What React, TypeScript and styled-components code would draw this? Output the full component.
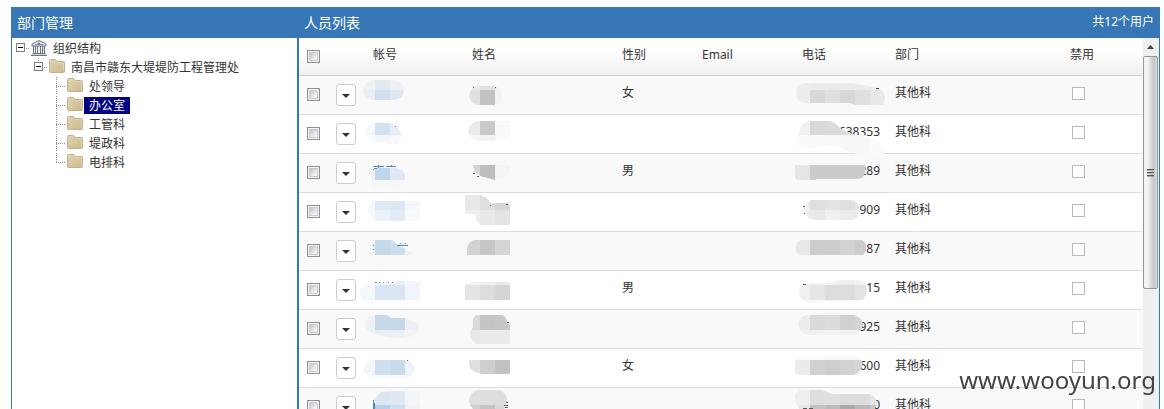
import React, { useId } from "react";
import styled, { createGlobalStyle } from "styled-components";

const BLUE = "#3777b6";

const GlobalStyle = createGlobalStyle`
  * { box-sizing: border-box; }
  body {
    margin: 0;
    background: #fff;
    color: #333;
    font: 12px/18px "Noto Sans", "Noto Sans CJK SC", sans-serif;
  }
`;

const Shell = styled.div`
  display: grid;
  grid-template-columns: 286px minmax(0, 1fr);
  height: 100vh;
  padding: 7px 4px 0 11px;
  overflow: hidden;
`;

const Panel = styled.section<{ $main?: boolean }>`
  display: flex;
  flex-direction: column;
  min-height: 0;
  border: solid ${BLUE};
  border-width: ${(p) => (p.$main ? "0 1px 0 2px" : "0 0 0 1px")};
`;

const PanelHeader = styled.header`
  display: flex;
  flex: none;
  align-items: center;
  justify-content: space-between;
  height: 31px;
  padding: 0 5px;
  background: ${BLUE};
  color: #fff;
`;

const PanelTitle = styled.h2`
  margin: 0;
  font-size: 14px;
  font-weight: 400;
`;

const Count = styled.span`
  padding-bottom: 2px;
`;

/* ---------- department tree ---------- */

const TreeList = styled.ul`
  margin: 0;
  padding: 0;
  list-style: none;
`;

const Branch = styled(TreeList)`
  padding-left: 18px;
`;

const TreeRow = styled.div`
  display: flex;
  align-items: flex-end;
  height: 19px;
`;

const Toggle = styled.button`
  display: block;
  width: 18px;
  height: 19px;
  padding: 0;
  border: 0;
  background: none;
`;

const NodeIcon = styled.svg`
  display: block;
  flex: none;
  width: 18px;
  height: 19px;
`;

const NodeLabel = styled.a<{ $selected?: boolean }>`
  height: 17px;
  padding: 0 5px;
  line-height: 17px;
  white-space: nowrap;
  text-decoration: none;
  color: ${(p) => (p.$selected ? "#fff" : "#333")};
  background: ${(p) => (p.$selected ? "#000080" : "transparent")};
`;

function Guide({ toggle, up, down }: { toggle?: boolean; up?: boolean; down?: boolean }) {
  const dots = { stroke: "#909090", strokeDasharray: "1 1", fill: "none" };
  return (
    <NodeIcon viewBox="0 0 18 19" aria-hidden="true" shapeRendering="crispEdges">
      {up && <path d="M8.5 1V10" {...dots} />}
      {down && <path d="M8.5 11V20" {...dots} />}
      <path d="M8 10.5H18" {...dots} />
      {toggle && (
        <>
          <rect x="4.5" y="5.5" width="8" height="8" fill="#fff" stroke="#808080" />
          <path d="M6 9.5H11" stroke="#000" />
        </>
      )}
    </NodeIcon>
  );
}

function FolderIcon() {
  const id = useId();
  return (
    <NodeIcon viewBox="0 0 18 19" aria-hidden="true">
      <linearGradient id={id} x1="0" y1="0" x2="1" y2="1">
        <stop offset="0" stopColor="#e2d5b6" />
        <stop offset="1" stopColor="#cbb88c" />
      </linearGradient>
      <path
        d="M1.5 3.5Q1.5 2.5 2.5 2.5H7.5L9.5 4.5H15.5Q16.5 4.5 16.5 5.5V14.5Q16.5 15.5 15.5 15.5H2.5Q1.5 15.5 1.5 14.5Z"
        fill={`url(#${id})`}
        stroke="#c2b189"
      />
      <path d="M9.5 5.5H15.5V14" fill="none" stroke="#e9dfc6" strokeOpacity="0.6" />
    </NodeIcon>
  );
}

function BankIcon() {
  return (
    <NodeIcon viewBox="0 0 18 19" aria-hidden="true">
      <path d="M9 2.5L2 6V8H16V6Z" fill="#dfe6ea" stroke="#667783" />
      <path d="M5 6.5H13" stroke="#8696a1" />
      <circle cx="9" cy="5.5" r="1" fill="#5a6b76" />
      <path
        d="M3.5 8V15M5.5 8V15M7.5 8V15M10.5 8V15M12.5 8V15M14.5 8V15"
        stroke="#667783"
      />
      <path d="M4.5 9V14M9 9V14M13.5 9V14" stroke="#dde4e8" />
      <path d="M2.5 15.5H15.5M1 17.5H17" fill="none" stroke="#667783" />
      <path d="M1.5 16.5H16.5" stroke="#cfd8dd" />
    </NodeIcon>
  );
}

const departments = ["处领导", "办公室", "工管科", "堤政科", "电排科"];

const TreeNav = styled.nav`
  min-height: 0;
  overflow: hidden;
`;

function DepartmentTree() {
  return (
    <TreeNav aria-label="部门管理">
      <TreeList>
        <li>
          <TreeRow>
            <Toggle aria-label="组织结构">
              <Guide toggle />
            </Toggle>
            <BankIcon />
            <NodeLabel href="#">组织结构</NodeLabel>
          </TreeRow>
          <Branch>
            <li>
              <TreeRow>
                <Toggle aria-label="南昌市赣东大堤堤防工程管理处">
                  <Guide toggle up />
                </Toggle>
                <FolderIcon />
                <NodeLabel href="#">南昌市赣东大堤堤防工程管理处</NodeLabel>
              </TreeRow>
              <Branch>
                {departments.map((name, i) => (
                  <li key={name}>
                    <TreeRow>
                      <Guide up down={i < departments.length - 1} />
                      <FolderIcon />
                      <NodeLabel href="#" $selected={name === "办公室"}>
                        {name}
                      </NodeLabel>
                    </TreeRow>
                  </li>
                ))}
              </Branch>
            </li>
          </Branch>
        </li>
      </TreeList>
    </TreeNav>
  );
}

/* ---------- privacy mosaic over personal data ---------- */

type Mask = {
  shape: string;
  xs: number[];
  ys: number[];
  tones: string[];
  trace?: string;
};

const MosaicSvg = styled.svg`
  position: absolute;
  top: 0;
  left: 0;
  width: 100px;
  height: 39px;
  overflow: visible;
  pointer-events: none;
`;

function Mosaic({ mask, ink = "#555" }: { mask: Mask; ink?: string }) {
  const id = useId();
  const { shape, xs, ys, tones, trace } = mask;
  return (
    <MosaicSvg aria-hidden="true" shapeRendering="crispEdges">
      <clipPath id={id}>
        <path d={shape} />
      </clipPath>
      <g clipPath={`url(#${id})`}>
        {tones.flatMap((line, r) =>
          line.split(" ").map((tone, c) => (
            <rect
              key={`${r}-${c}`}
              x={xs[c]}
              y={ys[r]}
              width={xs[c + 1] - xs[c]}
              height={ys[r + 1] - ys[r]}
              fill={`#${tone}`}
            />
          ))
        )}
      </g>
      {trace && <path d={trace} stroke={ink} fill="none" />}
    </MosaicSvg>
  );
}

const AX = [-8, 10, 25, 40, 60];
const NX = [0, 16, 31, 46];
const PX = [0, 16, 31, 46, 61, 76, 92];

type Person = { account: Mask; name: Mask; gender?: string; tail: string; phone: Mask };

const people: Person[] = [
  {
    account: {
      shape: "M8 4H29Q39 5 39 14Q39 23 29 24H8Q-2 23 -2 14Q-2 5 8 4Z",
      xs: AX, ys: [4, 14, 24],
      tones: ["eff2f3 e3e9f1 eef0f4", "e9eff5 cfdfed dfe7f1"],
    },
    name: {
      shape: "M13 10H31Q38 13 38 20Q38 27 31 29H14Q6 27 5 20Q6 12 13 10Z",
      xs: NX, ys: [10, 14, 29],
      tones: ["e8e8e8 e0e0e0 efefef", "e0e0df c2c2c2 f2f3f4"],
      trace: "M9 11.5H10M31 11.5H32",
    },
    gender: "女",
    tail: "",
    phone: {
      shape: "M12 7H55Q75 9 86 13Q91 17 91 22L89 29H62L55 27H12Q2 26 2 17Q2 8 12 7Z",
      xs: PX, ys: [7, 14, 29],
      tones: ["ededed ebebeb e9ebea ebebeb ececec eeeeee", "ededed d8d8d8 dde0df d8d8d8 dfdfdf e8e8e8"],
      trace: "M82 12.5H85",
    },
  },
  {
    account: {
      shape: "M0 15Q2 9 10 8H25Q34 11 37 20Q34 30 27 30Q22 30 18 27L8 27Q0 24 0 15Z",
      xs: AX, ys: [8, 20, 31],
      tones: ["f5f9fd d3e2f1 e6eef8", "f9fbfe f3f7fc f5f8fd"],
      trace: "M30 11.5H31",
    },
    name: {
      shape: "M14 6H46V21L35 26H14Q5 24 4 16Q6 7 14 6Z",
      xs: NX, ys: [6, 20, 27],
      tones: ["ebebeb cbc9c8 f8f9fb", "f6f6f4 f2f2f2 fbfbfb"],
    },
    tail: "638353",
    phone: {
      shape: "M5 17Q7 7 16 6H36Q42 8 46 13Q54 18 62 20H70Q86 24 90 34V38L88 42H80Q64 40 54 36Q40 28 26 32Q10 36 3 30Q1 24 5 17Z",
      xs: PX, ys: [6, 20, 43],
      tones: ["f1f1f1 d9d9d9 dadada dddddd f8f8f8 f8f8f8", "fafafa fafafa f9f9f9 f8f8f8 f8f8f8 fafafa"],
    },
  },
  {
    account: {
      shape: "M10 14H30Q38 15 40 20V26Q38 34 28 34H14Q6 34 6 26Q6 18 10 14Z",
      xs: AX, ys: [13, 26, 35],
      tones: ["f0f2f5 bfd5ea dfe7f1", "f5f6f7 f5f6f7 f5f6f7"],
      trace: "M8 12.5H19M21 12.5H31M13.5 11V14M9 14.5H12M26.5 11V13M8 15.5H9",
    },
    name: {
      shape: "M9 11H46V18Q42 25 31 26L24 24Q10 22 9 11Z",
      xs: NX, ys: [11, 26],
      tones: ["d6d4d2 bdbdbd f4f4f4"],
      trace: "M9 19.5H11M13 22.5H15",
    },
    gender: "男",
    tail: "289",
    phone: {
      shape: "M1 11H71V18Q70 25 64 25H22V26H4L1 24Z",
      xs: PX, ys: [11, 27],
      tones: ["e5e5e5 cbcbcb cbcbcb cbcbcb cbcbcb"],
    },
  },
  {
    account: {
      shape: "M8 8H55V26L50 28H12Q3 26 3 17Q4 10 8 8Z",
      xs: AX, ys: [8, 17, 28],
      tones: ["f3f8fc dfe9f4 dbe7f4 f4f8fc", "f8fbfe ecf2f9 e3ebf6 f7fafd"],
    },
    name: {
      shape: "M1 2H16Q24 4 26 10H44L46 13V32H16Q11 28 11 21H1Z",
      xs: NX, ys: [2, 17, 32],
      tones: ["e8e8e8 dfdfdf d6d6d6", "eeeeee e9e9e9 e3e3e3"],
      trace: "M26 12.5H27M42 11.5H44",
    },
    tail: "909",
    phone: {
      shape: "M16 7H57Q65 9 66 17Q65 25 58 27H20Q11 25 11 17Q11 10 16 7Z",
      xs: PX, ys: [7, 17, 28],
      tones: ["eeeeee dedfdf e2e3e2 dfdfdf e6e6e6", "eeeeee e9e9e9 f0f0f0 ebebeb ebebeb"],
      trace: "M9 13.5H11M10 20.5H11",
    },
  },
  {
    account: {
      shape: "M8 8H27L34 14Q44 18 48 23H6Z",
      xs: AX, ys: [8, 23],
      tones: ["f1f3f5 c4d8ea cddded eff2f6"],
      trace: "M32 13.5H43M35 11.5H36M40 11.5H41M8 13.5H9M8 17.5H9",
    },
    name: {
      shape: "M10 8H46V23H3V17Q4 10 10 8Z",
      xs: NX, ys: [8, 23],
      tones: ["d4d2d3 c6c6c6 d5d5d5"],
    },
    tail: "87",
    phone: {
      shape: "M8 8H68L72 12V19L69 23H8Q1 21 1 15Q3 9 8 8Z",
      xs: PX, ys: [8, 23],
      tones: ["e8e8e8 cdcdcd cccccc d2d2d2 cccccc"],
    },
  },
  {
    account: {
      shape: "M4 13H24L34 10H58L55 14V29L40 30L28 32H4Q-5 29 -6 21Q-4 14 4 13Z",
      xs: AX, ys: [10, 14, 29, 32],
      tones: ["f8fafd eef3fa e6eef8 f3f7fc", "f4f8fd d9e5f3 d9e5f3 f1f5fb", "fafbfd fafbfd fafbfd fafbfd"],
      trace: "M10 11.5H12M14 11.5H15M18 11.5H19M23 11.5H24M27 11.5H28",
    },
    name: {
      shape: "M6 11H45L46 14V29L42 30H6L1 29V14Z",
      xs: NX, ys: [11, 14, 29, 30],
      tones: ["f3f3f3 efefef ebebeb", "e5e4e3 dcdedd d4d4d4", "fafafa fafafa fafafa"],
    },
    gender: "男",
    tail: "15",
    phone: {
      shape: "M14 12H36L46 9H64Q72 11 73 18Q73 25 68 29L50 30H34L26 32H14Q6 30 5 22Q6 14 14 12Z",
      xs: PX, ys: [9, 14, 29, 32],
      tones: ["f4f4f4 f3f3f3 f0f0f0 efefef f1f1f1", "f0f0f0 e6e6e6 dcdedd dcdedd e3e3e3", "f8f8f8 f8f8f8 f8f8f8 f8f8f8 f8f8f8"],
      trace: "M9 13.5H12",
    },
  },
  {
    account: {
      shape: "M0 14Q2 6 10 5H22L26 8H40Q54 12 54 18Q52 28 36 28Q20 28 12 24Q0 22 0 14Z",
      xs: AX, ys: [5, 20, 29],
      tones: ["edf1f4 c7d9e9 c5d8e9 eceff5", "eff2f5 eaeff4 ebf0f4 f1f3f6"],
    },
    name: {
      shape: "M12 5H38Q43 7 43 13L46 15V34H12Q6 30 6 22L9 17V8Z",
      xs: NX, ys: [5, 20, 34],
      tones: ["d9d9d8 c5c5c5 c6c8c7", "e8e8e8 ebebeb ebebeb"],
      trace: "M43 12.5H45",
    },
    tail: "925",
    phone: {
      shape: "M12 5H60Q68 7 69 15Q67 23 60 25H14Q5 23 4 14Q6 6 12 5Z",
      xs: PX, ys: [5, 20, 25],
      tones: ["ececec dbdad8 dadddc d0d0d0 d4d4d4", "f1f1f1 f1f1f1 f1f1f1 f1f1f1 f1f1f1"],
    },
  },
  {
    account: {
      shape: "M5 11H43Q49 14 50 20Q48 28 40 30H8Q0 28 -1 21Q0 13 5 11Z",
      xs: AX, ys: [11, 26, 31],
      tones: ["f2f5f9 cfdfef c8dbeb edf2fb", "f8fafc f8fafc f8fafc f8fafc"],
      trace: "M42 11.5H43",
    },
    name: {
      shape: "M5 11H46V25H18Q6 23 5 16Z",
      xs: NX, ys: [11, 25],
      tones: ["e1e0df cecece c1c1c1"],
    },
    gender: "女",
    tail: "600",
    phone: {
      shape: "M4 8H62Q66 9 68 13V18Q66 24 60 26H6L1 24V11Z",
      xs: PX, ys: [8, 11, 26],
      tones: ["fafafa fafafa f8f8f8 f8f8f8 f8f8f8", "ebebeb d1d1d1 cecece d2d2d2 d5d5d3"],
    },
  },
  {
    account: {
      shape: "M16 4L25 3H55V22H8V16Q11 8 16 4Z",
      xs: AX, ys: [3, 17, 22],
      tones: ["e6edf4 dce6f0 e0e8f0 f3f5f7", "b9cee8 b9cee8 d2dff0 f0f3f6"],
      trace: "M8.5 12V21M9.5 15V21",
    },
    name: {
      shape: "M14 2H36Q43 6 43 12L40 22H10Q5 17 5 11Q7 4 14 2Z",
      xs: NX, ys: [2, 17, 22],
      tones: ["dfdfdd dedede dddddd", "d0d0d0 c5c5c5 d8d8d8"],
      trace: "M42 14.5H44M40 17.5H44M41 19.5H44",
    },
    tail: "0",
    phone: {
      shape: "M6 2H28L38 6H76Q83 9 83 16L80 22H6L1 14V6Z",
      xs: PX, ys: [2, 17, 22],
      tones: ["efefef dedede dfdfdf dcdcdc dcdcdc e4e4e4", "e8e8e8 c3c3c3 bbbbbb aaaaaa b9b9b9 c8c8c8"],
      trace: "M9 20.5H13M15 20.5H19",
    },
  },
];

/* ---------- people table ---------- */

const ListBody = styled.div`
  display: flex;
  flex: 1;
  min-height: 0;
`;

const TableArea = styled.div`
  flex: 1;
  min-width: 0;
  overflow: hidden;
`;

const Table = styled.table`
  width: 100%;
  table-layout: fixed;
  border-spacing: 0;
`;

const Col = styled.col<{ $w?: number }>`
  width: ${(p) => (p.$w ? `${p.$w}px` : "auto")};
`;

const HeadRow = styled.tr`
  background: linear-gradient(#fff 30%, #f0f0f0);
`;

const Th = styled.th`
  height: 38px;
  padding: 8px 8px 0;
  border-bottom: 1px solid #ccc;
  font-weight: 400;
  text-align: left;
  vertical-align: top;
`;

const Row = styled.tr`
  background: #fff;
  &:nth-child(odd) { background: #f9f9f9; }
`;

const Td = styled.td`
  position: relative;
  height: 39px;
  padding: 8px 8px 0;
  border-bottom: 1px solid #ddd;
  vertical-align: top;
  white-space: nowrap;
`;

const Tick = styled.input<{ $raised?: boolean }>`
  appearance: none;
  display: block;
  width: 13px;
  height: 13px;
  margin: ${(p) => (p.$raised ? "4px 0 0" : "3px 0 0 2px")};
  border: 1px solid ${(p) => (p.$raised ? "#8e8f8f" : "#b9b9b9")};
  background: ${(p) => (p.$raised ? "linear-gradient(135deg, #c4cad2 25%, #f6f6f6 70%)" : "#fff")};
  box-shadow: ${(p) => (p.$raised ? "inset 0 0 0 1px #f4f4f4, inset 0 0 0 2px #c8cbcf" : "none")};
`;

const MenuButton = styled.button`
  display: flex;
  align-items: center;
  justify-content: center;
  width: 20px;
  height: 22px;
  padding: 2px 0 0;
  border: 1px solid #ccc;
  border-radius: 3px;
  background: #fff;
`;

const PhoneTail = styled.div`
  width: 78px;
  text-align: right;
`;

function Caret() {
  return (
    <svg width="8" height="4" viewBox="0 0 8 4" aria-hidden="true">
      <path d="M0 0H8L4 4Z" fill="#333" />
    </svg>
  );
}

function PeopleTable() {
  return (
    <Table>
      <colgroup>
        <Col $w={29} />
        <Col $w={37} />
        <Col $w={99} />
        <Col $w={150} />
        <Col $w={80} />
        <Col $w={100} />
        <Col $w={93} />
        <Col $w={175} />
        <Col />
      </colgroup>
      <thead>
        <HeadRow>
          <Th><Tick type="checkbox" $raised aria-label="全选" /></Th>
          <Th />
          <Th>帐号</Th>
          <Th>姓名</Th>
          <Th>性别</Th>
          <Th>Email</Th>
          <Th>电话</Th>
          <Th>部门</Th>
          <Th>禁用</Th>
        </HeadRow>
      </thead>
      <tbody>
        {people.map((p, i) => (
          <Row key={i}>
            <Td><Tick type="checkbox" $raised aria-label={`选择 ${i + 1}`} /></Td>
            <Td><MenuButton aria-label="操作"><Caret /></MenuButton></Td>
            <Td><Mosaic mask={p.account} ink="#428bca" /></Td>
            <Td><Mosaic mask={p.name} /></Td>
            <Td>{p.gender}</Td>
            <Td />
            <Td>
              <PhoneTail>{p.tail}</PhoneTail>
              <Mosaic mask={p.phone} />
            </Td>
            <Td>其他科</Td>
            <Td><Tick type="checkbox" aria-label={`禁用 ${i + 1}`} /></Td>
          </Row>
        ))}
      </tbody>
    </Table>
  );
}

/* ---------- scrollbar ---------- */

const ScrollTrack = styled.div`
  display: flex;
  flex: none;
  flex-direction: column;
  width: 17px;
  padding: 0 1px 0 0;
  border-left: 1px solid #f8f8f8;
  background: #efefef;
`;

const ScrollArrow = styled.button`
  display: flex;
  flex: none;
  align-items: center;
  justify-content: center;
  height: 18px;
  padding: 0;
  border: 0;
  background: none;
`;

const ScrollThumb = styled.div`
  display: flex;
  align-items: center;
  justify-content: center;
  height: 66%;
  border: 1px solid #979797;
  border-radius: 2px;
  background: linear-gradient(90deg, #f4f4f4 0 30%, #e2e3e5 45%, #c6c7cb 75%, #d8d8da);
`;

const ScrollRail = styled.div`
  flex: 1;
  min-height: 0;
`;

function Scrollbar() {
  return (
    <ScrollTrack>
      <ScrollArrow aria-label="向上滚动">
        <svg width="7" height="4" viewBox="0 0 7 4" aria-hidden="true">
          <path d="M3.5 0L7 4H0Z" fill="#444" />
        </svg>
      </ScrollArrow>
      <ScrollRail>
        <ScrollThumb>
          <svg width="8" height="9" viewBox="0 0 8 9" aria-hidden="true" shapeRendering="crispEdges">
            <path d="M0 1.5H7M0 4.5H7M0 7.5H7" stroke="#555" />
            <path d="M0 2.5H7M0 5.5H7M0 8.5H7" stroke="#aaa" />
          </svg>
        </ScrollThumb>
      </ScrollRail>
    </ScrollTrack>
  );
}

const Watermark = styled.div`
  position: fixed;
  right: 8px;
  bottom: 13px;
  color: #444;
  font-size: 24px;
  line-height: 32px;
  pointer-events: none;
`;

export default function App() {
  return (
    <>
      <GlobalStyle />
      <Shell>
        <Panel>
          <PanelHeader>
            <PanelTitle>部门管理</PanelTitle>
          </PanelHeader>
          <DepartmentTree />
        </Panel>
        <Panel $main>
          <PanelHeader>
            <PanelTitle>人员列表</PanelTitle>
            <Count>共12个用户</Count>
          </PanelHeader>
          <ListBody>
            <TableArea>
              <PeopleTable />
            </TableArea>
            <Scrollbar />
          </ListBody>
        </Panel>
      </Shell>
      <Watermark>www.wooyun.org</Watermark>
    </>
  );
}
